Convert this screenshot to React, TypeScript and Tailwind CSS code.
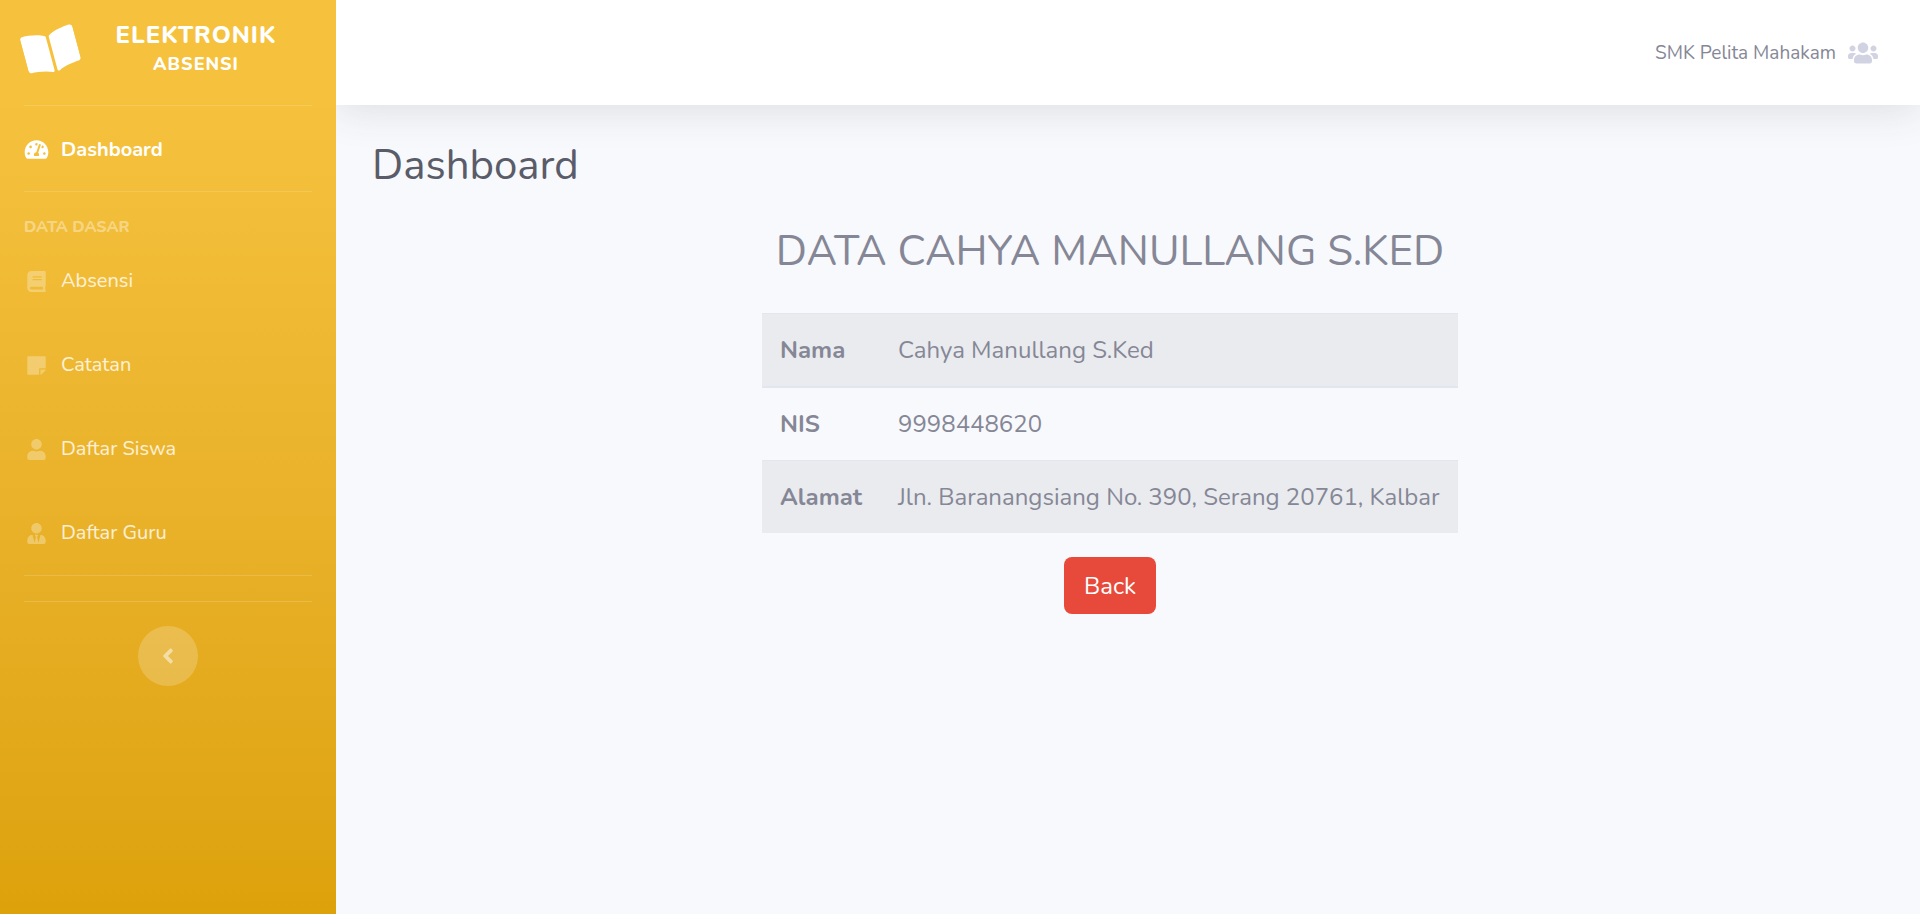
import type { IconType } from 'react-icons';
import {
  FaAngleLeft,
  FaBook,
  FaBookOpen,
  FaStickyNote,
  FaTachometerAlt,
  FaUser,
  FaUsers,
  FaUserTie,
} from 'react-icons/fa';

const menu: { label: string; icon: IconType }[] = [
  { label: 'Absensi', icon: FaBook },
  { label: 'Catatan', icon: FaStickyNote },
  { label: 'Daftar Siswa', icon: FaUser },
  { label: 'Daftar Guru', icon: FaUserTie },
];

const rows = [
  { label: 'Nama', value: 'Cahya Manullang S.Ked' },
  { label: 'NIS', value: '9998448620' },
  { label: 'Alamat', value: 'Jln. Baranangsiang No. 390, Serang 20761, Kalbar' },
];

function Divider() {
  return <hr className="mx-6 border-t border-white/15" />;
}

function Sidebar() {
  return (
    <nav className="flex w-[336px] shrink-0 flex-col bg-linear-to-b from-[#f6c23e] from-10% to-[#dda20a] text-xl">
      <a href="#" className="flex h-[105px] items-center pr-[22px] pb-[3px] pl-6 text-white">
        <FaBookOpen className="h-12 w-[54px] shrink-0 -rotate-15" />
        <span className="flex grow flex-col items-center pb-1 text-center font-extrabold tracking-wider uppercase">
          <span className="text-2xl leading-[30px]">Elektronik</span>
          <span className="text-lg leading-7">Absensi</span>
        </span>
      </a>
      <Divider />
      <a href="#" className="flex h-[85px] items-center gap-3 px-6 pt-0.5 font-bold text-white">
        <FaTachometerAlt className="h-[21px] w-[25px]" />
        Dashboard
      </a>
      <Divider />
      <h2 className="mt-[23px] px-6 text-base leading-6 font-extrabold text-white/40 uppercase">Data Dasar</h2>
      <ul>
        {menu.map(({ label, icon: Icon }) => (
          <li key={label}>
            <a href="#" className="flex h-[84px] items-center gap-3 px-6 text-white/80">
              <Icon className="h-[21px] w-[25px] text-white/30" />
              {label}
            </a>
          </li>
        ))}
      </ul>
      <Divider />
      <div className="h-[25px]" />
      <Divider />
      <button
        type="button"
        aria-label="Toggle sidebar"
        className="mt-6 flex size-[60px] items-center justify-center self-center rounded-full bg-white/20 text-white/50"
      >
        <FaAngleLeft className="size-6" />
      </button>
    </nav>
  );
}

export default function App() {
  return (
    <div className="flex min-h-screen bg-[#f8f9fc] font-[Nunito,Lato,sans-serif] text-2xl leading-9 text-[#858796]">
      <Sidebar />
      <div className="flex min-w-0 grow flex-col overflow-hidden">
        <header className="flex h-[105px] items-center justify-end bg-white px-[42px] shadow-[0_4px_42px_0_rgba(58,59,69,0.15)]">
          <a href="#" className="flex items-center gap-3 text-[19px] leading-7">
            SMK Pelita Mahakam
            <FaUsers className="size-[30px] text-[#d1d3e2]" />
          </a>
        </header>
        <main className="px-9 pt-9">
          <h1 className="text-[42px] leading-[50px] text-[#5a5c69]">Dashboard</h1>
          <section className="mt-9 mr-9 flex flex-col items-center">
            <h2 className="text-[42px] leading-[50px] uppercase">Data Cahya Manullang S.Ked</h2>
            <table className="mt-9 min-w-[696px] border-collapse text-left">
              <tbody>
                {rows.map(({ label, value }) => (
                  <tr
                    key={label}
                    className="border-t border-[#e3e6f0] odd:bg-[#eaebef] first:border-b-2"
                  >
                    <th scope="row" className="w-[118px] p-[18px] font-bold">{label}</th>
                    <td className="p-[18px]">{value}</td>
                  </tr>
                ))}
              </tbody>
            </table>
            <button type="button" className="mt-6 h-[57px] rounded-lg bg-[#e74a3b] px-5 text-white">
              Back
            </button>
          </section>
        </main>
      </div>
    </div>
  );
}
